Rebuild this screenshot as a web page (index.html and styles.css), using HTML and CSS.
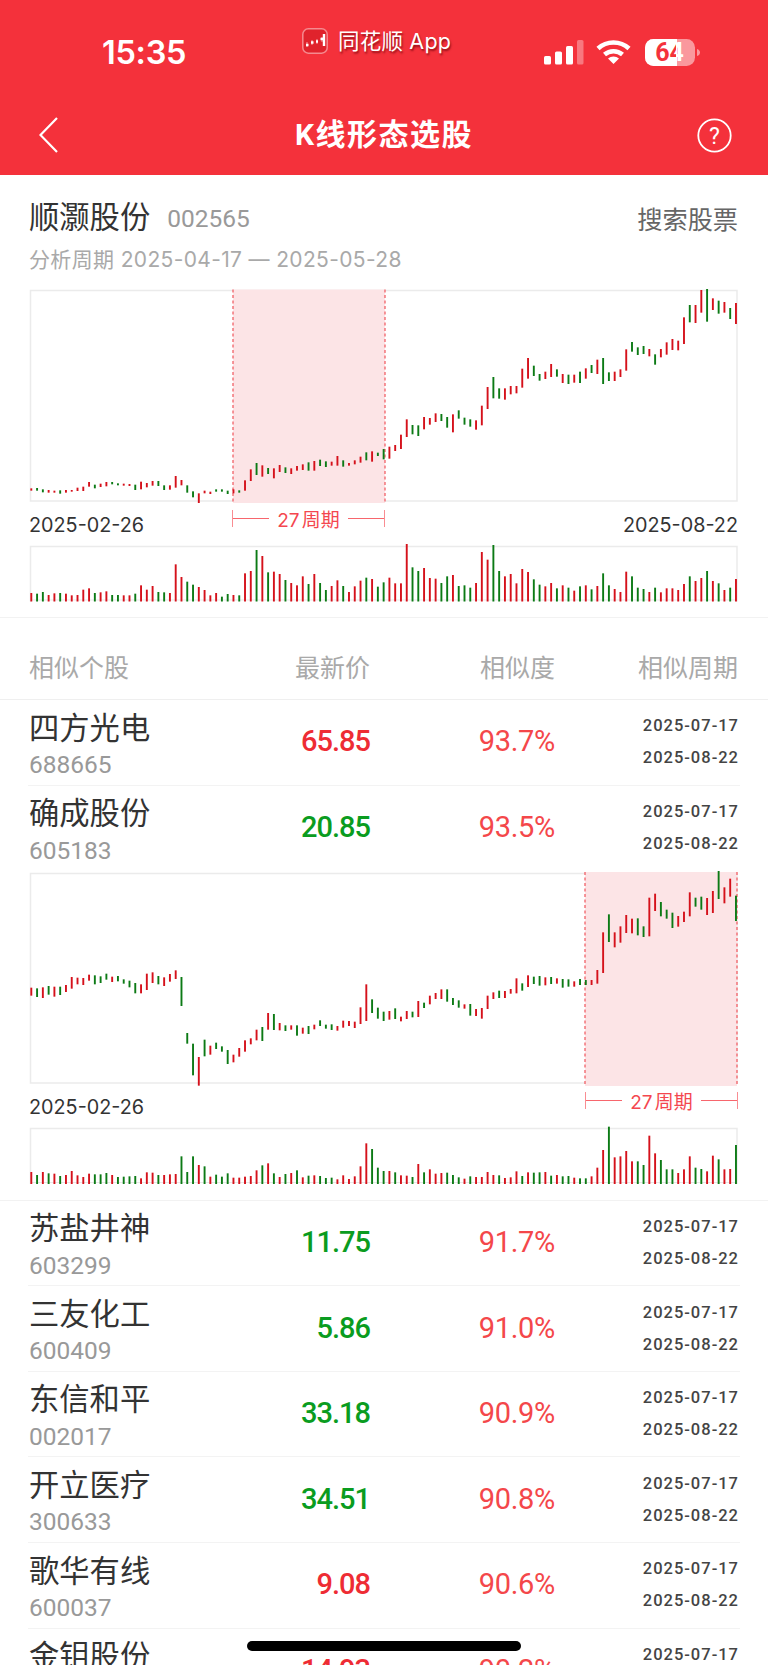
FILE: index.html
```html
<!DOCTYPE html>
<html lang="zh-CN">
<head>
<meta charset="utf-8">
<title>K线形态选股</title>
<link rel="stylesheet" href="styles.css">
</head>
<body>
<div class="page">
  <header class="top">
    <div class="status">
      <span class="time">15:35</span>
      <div class="source">
        <svg class="app-logo" viewBox="0 0 26 26" width="26" height="26">
          <rect x="0.8" y="0.8" width="24.4" height="24.4" rx="5.5" class="logo-bg"/>
          <path class="logo-line" d="M4 17h2.5M9 14.5h2.5M14 13.5h2M18.5 11h2.5M22 6v12"/>
          <path class="logo-wick" d="M5 14v5M10 12v5M15 11v5M20 9v5"/>
        </svg>
        <span class="source-name">同花顺 App</span>
      </div>
      <svg class="sys" viewBox="0 0 157 27" width="157" height="27">
        <rect class="wh" x="0" y="17" width="7" height="8.5" rx="1.6"/>
        <rect class="wh" x="11" y="12.5" width="7" height="13" rx="1.6"/>
        <rect class="wh" x="22" y="7" width="7" height="18.5" rx="1.6"/>
        <rect class="wh dim" x="33" y="1" width="6.5" height="24.5" rx="1.6"/>
        <path class="wifi-arc" d="M54 9.5 A 23 23 0 0 1 85 9.5"/>
        <path class="wifi-arc" d="M60.5 15.5 A 14 14 0 0 1 78.5 15.5"/>
        <path class="wh" d="M69.5 25 L64 19.6 A 8 8 0 0 1 75 19.6 Z"/>
        <defs>
          <linearGradient id="bat-text" x1="100" x2="152" gradientUnits="userSpaceOnUse" y1="0" y2="0">
            <stop offset="0.62" stop-color="#f4313b"/>
            <stop offset="0.62" stop-color="#ffffff"/>
          </linearGradient>
        </defs>
        <rect class="bat-dim" x="101" y="0" width="50" height="27" rx="8.5"/>
        <path class="wh" d="M109.5 0H133V27H109.5A8.5 8.5 0 0 1 101 18.500V8.500A8.500 8.500 0 0 1 109.500 0Z"/>
        <path class="bat-dim" d="M153 10c2 .6 3 2 3 3.500s-1 3-3 3.500Z"/>
        <text class="bat-num" x="125.500" y="22" fill="url(#bat-text)">64</text>
      </svg>
    </div>
    <nav class="nav">
      <svg class="back" viewBox="0 0 20 36" width="20" height="36"><path d="M18 1 1.500 18 18 35"/></svg>
      <h1 class="title">K线形态选股</h1>
      <svg class="help" viewBox="0 0 35 35" width="35" height="35">
        <circle cx="17.500" cy="17.500" r="16.200"/>
        <text x="17.500" y="25.500">?</text>
      </svg>
    </nav>
  </header>

  <section class="summary">
    <div class="stock-line">
      <div class="stock-id"><span class="stock-name">顺灏股份</span><span class="stock-code">002565</span></div>
      <a class="search">搜索股票</a>
    </div>
    <p class="period">分析周期 2025-04-17 — 2025-05-28</p>
  </section>

  <section class="chart chart-main">
    <svg class="kline" id="k1" width="768" height="220"></svg>
    <div class="axis">
      <span class="axis-date">2025-02-26</span>
      <span class="axis-date">2025-08-22</span>
      <div class="span span-a"><i></i><b>27 周期</b><i></i></div>
    </div>
    <svg class="vol" id="v1" width="768" height="58"></svg>
  </section>

  <div class="thead">
    <span>相似个股</span><span class="ta-r">最新价</span><span class="ta-r">相似度</span><span class="ta-r">相似周期</span>
  </div>

  <div class="row">
    <div class="who"><div class="name">四方光电</div><div class="code">688665</div></div>
    <div class="price up">65.85</div><div class="pct">93.7%</div>
    <div class="dates"><span>2025-07-17</span><span>2025-08-22</span></div>
  </div>
  <div class="row row-open">
    <div class="who"><div class="name">确成股份</div><div class="code">605183</div></div>
    <div class="price down">20.85</div><div class="pct">93.5%</div>
    <div class="dates"><span>2025-07-17</span><span>2025-08-22</span></div>
  </div>

  <section class="chart chart-open">
    <svg class="kline" id="k2" width="768" height="215"></svg>
    <div class="axis axis-open">
      <span class="axis-date">2025-02-26</span>
      <div class="span span-b"><i></i><b>27 周期</b><i></i></div>
    </div>
    <svg class="vol" id="v2" width="768" height="58"></svg>
  </section>

  <div class="row">
    <div class="who"><div class="name">苏盐井神</div><div class="code">603299</div></div>
    <div class="price down">11.75</div><div class="pct">91.7%</div>
    <div class="dates"><span>2025-07-17</span><span>2025-08-22</span></div>
  </div>
  <div class="row">
    <div class="who"><div class="name">三友化工</div><div class="code">600409</div></div>
    <div class="price down">5.86</div><div class="pct">91.0%</div>
    <div class="dates"><span>2025-07-17</span><span>2025-08-22</span></div>
  </div>
  <div class="row">
    <div class="who"><div class="name">东信和平</div><div class="code">002017</div></div>
    <div class="price down">33.18</div><div class="pct">90.9%</div>
    <div class="dates"><span>2025-07-17</span><span>2025-08-22</span></div>
  </div>
  <div class="row">
    <div class="who"><div class="name">开立医疗</div><div class="code">300633</div></div>
    <div class="price down">34.51</div><div class="pct">90.8%</div>
    <div class="dates"><span>2025-07-17</span><span>2025-08-22</span></div>
  </div>
  <div class="row">
    <div class="who"><div class="name">歌华有线</div><div class="code">600037</div></div>
    <div class="price up">9.08</div><div class="pct">90.6%</div>
    <div class="dates"><span>2025-07-17</span><span>2025-08-22</span></div>
  </div>
  <div class="row">
    <div class="who"><div class="name">金钼股份</div><div class="code">601958</div></div>
    <div class="price up">14.93</div><div class="pct">90.2%</div>
    <div class="dates"><span>2025-07-17</span><span>2025-08-22</span></div>
  </div>

  <div class="home-bar"></div>
</div>
<script src="charts.js"></script>
</body>
</html>
```

FILE: styles.css
```css
html, body {
  margin: 0;
  height: 1665px;
  overflow: hidden;
  background: #fff;
}
.page {
  position: relative;
  width: 768px;
  height: 1665px;
  overflow: hidden;
  font-family: "Roboto", "Noto Sans CJK SC", sans-serif;
  color: #333;
}

/* red header */
.top { background: #f4313b; height: 175px; color: #fff; }
.status {
  height: 104px;
  display: flex;
  align-items: center;
  padding-left: 102px;
  box-sizing: border-box;
}
.time {
  width: 200px;
  font-family: "Inter", sans-serif;
  font-size: 32.500px;
  font-weight: 600;
  letter-spacing: -0.3px;
}
.source {
  display: flex;
  align-items: center;
  gap: 10px;
  margin-bottom: 23px;
}
.source-name {
  font-family: "Inter", "Noto Sans CJK SC", sans-serif;
  font-size: 21.500px;
  line-height: 28px;
  letter-spacing: .2px;
  text-shadow: 1px 2px 2px rgba(110, 0, 10, .7);
}
.logo-bg { fill: #e0232c; stroke: #f58a8f; stroke-width: 1.500; }
.logo-line { stroke: #fff; stroke-width: 2.400; fill: none; }
.logo-wick { stroke: #fff; stroke-width: .8; fill: none; opacity: .7; }
.sys { margin-left: auto; margin-right: 67px; margin-top: 0; overflow: visible; }
.wh { fill: #fff; }
.dim { opacity: .35; }
.bat-dim { fill: #fff; opacity: .5; }
.wifi-arc { fill: none; stroke: #fff; stroke-width: 4.600; }
.bat-num {
  font-family: "Roboto", sans-serif;
  font-size: 25px;
  font-weight: 700;
  text-anchor: middle;
}

.nav {
  height: 62px;
  display: flex;
  align-items: center;
  justify-content: space-between;
  padding: 0 36px 0 39px;
}
.back { fill: none; }
.back path { fill: none; stroke: #fff; stroke-width: 2.200; }
.title {
  margin: 0;
  font-family: "Roboto", "Noto Sans CJK SC", sans-serif;
  font-size: 30px;
  line-height: 40px;
  font-weight: 700;
  letter-spacing: 1.500px;
  padding-left: 12px;
}
.help circle { fill: none; stroke: #fff; stroke-width: 1.800; }
.help text {
  fill: #fff;
  font-family: "Roboto", sans-serif;
  font-size: 23px;
  text-anchor: middle;
}

/* summary */
.summary { padding: 23px 30px 12px 29px; height: 111px; box-sizing: border-box; }
.stock-line { display: flex; justify-content: space-between; align-items: center; height: 40px; }
.stock-id { display: flex; align-items: center; gap: 17px; }
.stock-name { font-size: 30.300px; line-height: 40px; }
.stock-code { font-size: 24.500px; color: #999; }
.search { font-size: 25.200px; color: #666; }
.period {
  margin: 7px 0 0;
  font-family: "Inter", "Noto Sans CJK SC", sans-serif;
  font-size: 21px;
  line-height: 30px;
  letter-spacing: .35px;
  color: #a9a9a9;
}

/* charts */
.chart { display: block; }
.chart-main { padding-bottom: 13px; border-bottom: 1px solid #f2f2f2; height: 332px; box-sizing: border-box; }
.chart-open { padding-bottom: 14px; border-bottom: 1px solid #f2f2f2; height: 329.500px; box-sizing: border-box; }
.kline, .vol { display: block; overflow: visible; }
.axis {
  position: relative;
  height: 40px;
  padding: 0 30px 0 29px;
  display: flex;
  justify-content: space-between;
  align-items: center;
  font-family: "Inter", sans-serif;
}
.axis-open { height: 42px; }
.axis-date { font-size: 19.800px; color: #333; position: relative; top: -1px; }
.axis-open .axis-date { top: 0; }
.span {
  position: absolute;
  top: 4px;
  height: 17px;
  display: flex;
  align-items: center;
  gap: 8px;
  border-left: 1px solid #f98d92;
  border-right: 1px solid #f98d92;
  box-sizing: border-box;
  color: #f4474f;
}
.span i { flex: 1; height: 1px; background: #f7666d; }
.span b {
  position: relative;
  top: 2px;
  font-weight: 400;
  font-size: 19px;
  font-family: "Inter", "Noto Sans CJK SC", sans-serif;
  line-height: 17px;
  word-spacing: -3px;
}
.span-a { left: 232px; width: 153px; }
.span-b { left: 585px; width: 153px; top: 6px; }

.frame { fill: none; stroke: #ebebeb; stroke-width: 1.500; }
.shade { fill: #fce4e6; }
.dash { stroke: #f0555c; stroke-width: 1.200; stroke-dasharray: 3 2.500; fill: none; }
.base { stroke: #e9e9e9; stroke-width: 1; }
.r { fill: #d5111b; }
.g { fill: #0c7a15; }

/* table */
.thead {
  display: grid;
  grid-template-columns: 191px 150px 185px 1fr;
  padding: 14px 30px 0 29px;
  height: 82px;
  box-sizing: border-box;
  align-items: center;
  font-size: 25px;
  color: #a9a9a9;
  border-bottom: 1px solid #efefef;
}
.ta-r { text-align: right; }
.row {
  display: grid;
  grid-template-columns: 191px 150px 185px 1fr;
  margin: 0 28px;
  padding: 0 2px 2px 1px;
  height: 85.600px;
  box-sizing: border-box;
  align-items: center;
  border-bottom: 1px solid #f3f3f3;
}
.row-open { border-bottom: 0; }
.who { align-self: start; padding-top: 10.500px; }
.name { font-size: 30.300px; line-height: 36px; color: #333; }
.code { font-size: 24.500px; line-height: 28px; margin-top: 4.500px; color: #999; }
.price { font-size: 29px; font-weight: 500; text-align: right; letter-spacing: -1px; }
.up { color: #ee2c34; }
.down { color: #0a9c20; }
.pct { font-size: 29px; text-align: right; letter-spacing: -.3px; color: #f4474a; }
.dates { display: flex; flex-direction: column; align-items: flex-end; gap: 12px; margin-top: 2px; }
.dates span { font-size: 16.500px; line-height: 20px; font-weight: 500; letter-spacing: 1px; color: #444; margin-right: -1px; }

.home-bar {
  position: absolute;
  left: 247px;
  top: 1641px;
  width: 274px;
  height: 10px;
  border-radius: 5px;
  background: #000;
}
```

FILE: charts.js
```js
(function () {
  var NS = 'http://www.w3.org/2000/svg';
  var X0 = 31.3, STEP = 5.776, W = 1.9;

  function add(svg, tag, attrs) {
    var el = document.createElementNS(NS, tag);
    for (var k in attrs) el.setAttribute(k, attrs[k]);
    svg.appendChild(el);
    return el;
  }

  // Candles: "r625,632" = red, top and bottom in thirds of a pixel from cropY.
  function candles(id, data, top, cropY, box, shade) {
    var svg = document.getElementById(id);
    add(svg, 'rect', { 'class': 'frame', x: 30.5, y: box[0] - top, width: 706.5, height: box[1] - box[0] });
    add(svg, 'rect', { 'class': 'shade', x: shade[0], y: shade[2] - top, width: shade[1] - shade[0], height: shade[3] - shade[2] });
    [shade[0], shade[1]].forEach(function (x) {
      add(svg, 'line', { 'class': 'dash', x1: x, x2: x, y1: shade[2] - top, y2: shade[3] - top });
    });
    data.split(/\s+/).forEach(function (item, i) {
      var p = item.slice(1).split(',');
      var y1 = +p[0] / 3 + cropY - top, y2 = +p[1] / 3 + cropY - top;
      add(svg, 'rect', { 'class': item[0], x: X0 + i * STEP - W / 2, y: y1, width: W, height: y2 - y1 });
    });
  }

  // Volume: "r939" = red, bar top in thirds of a pixel; all bars share one foot.
  function volume(id, data, top, cropY, foot) {
    var svg = document.getElementById(id);
    add(svg, 'path', { 'class': 'frame', d: 'M30.5 ' + (foot - top) + 'V0.5H737V' + (foot - top) });
    add(svg, 'line', { 'class': 'base', x1: 30, x2: 737, y1: foot - top - 1.5, y2: foot - top - 1.5 });
    data.split(/\s+/).forEach(function (item, i) {
      var y = +item.slice(1) / 3 + cropY - top;
      add(svg, 'rect', { 'class': item[0], x: X0 + i * STEP - W / 2, y: y, width: W, height: foot - top - y });
    });
  }

  candles('k1',
    'r625,632 g624,632 g628,637 r630,638 r632,638 g631,641 r630,638 r630,635 r623,633 r620,633 r606,620 g614,625 r611,621 r606,619 g606,613 g610,616 r611,617 r612,618 g614,630 r605,628 r609,622 r603,617 g603,618 g616,630 r616,629 r588,623 r600,616 g616,638 g634,652 r640,669 r632,640 r635,642 g628,635 g628,635 g632,642 r628,640 g631,638 r601,632 r568,603 g549,585 r556,590 g564,582 r565,595 r555,576 g562,579 r565,582 r558,572 r553,570 g547,572 r543,572 g539,558 g544,561 r545,557 r528,557 g541,560 r549,557 r541,553 r530,548 g517,541 r514,545 g518,528 g507,538 ' +
    'r500,536 r495,513 r464,507 r418,471 g435,463 g436,468 r411,448 r414,434 r400,426 g402,423 g411,443 r403,457 g391,416 g413,434 g418,440 r421,449 r377,436 r321,387 g291,355 g325,356 r325,359 r318,343 r318,340 r266,323 r234,296 g257,288 g282,302 r275,297 r252,291 g268,290 r282,309 g284,312 r284,308 g275,309 r265,296 g255,279 r239,282 g234,312 g277,303 r275,303 r268,291 r208,272 g186,215 g202,225 g198,222 r207,229 g223,254 r207,232 r187,224 r177,210 r182,211 r112,192 g75,127 r75,129 r30,98 g27,125 r55,90 g62,101 r66,98 g84,117 r69,132',
    286, 280, [290.5, 501], [233, 385, 289.5, 503]);

  volume('v1',
    'r939 g941 g936 r945 r940 g939 r941 r946 r945 r929 r925 g939 r937 r934 g945 g945 r946 r946 g941 r916 r929 r918 g936 g937 r939 r853 r891 g905 g914 r921 r930 r946 r939 g950 g942 r945 g946 r880 r873 g810 r828 g877 r875 r882 g900 r909 r916 r889 g912 r882 g909 g930 r918 r901 g918 r936 r919 r902 g893 r897 g920 g907 ' +
    'r893 r910 r910 r792 g862 g873 r864 r894 r896 g909 g889 r885 g918 g916 g923 r909 r816 r839 g795 g873 r889 r882 r910 r867 r876 g898 g914 r919 r909 g925 r916 g923 r932 g919 r916 g928 r918 g880 g916 r927 r936 r875 g889 g923 g927 r936 g923 r937 r925 r925 r930 r912 g889 r903 r894 g873 r903 g910 r930 g923 r897',
    546, 280, 601.5);

  candles('k2',
    'r383,407 g385,411 r382,414 g378,404 r380,410 g380,405 r375,396 r351,386 r353,373 r354,375 r344,362 g346,373 g349,369 g341,359 r350,366 g348,364 g358,371 g362,382 g369,400 r373,400 r341,390 r337,369 g348,373 r352,378 r342,365 r331,357 g351,438 g519,551 g551,646 r591,677 g539,589 r557,584 g548,567 g559,575 g570,612 r584,607 r564,590 r541,575 r535,553 r509,541 g501,543 r459,509 g462,510 r489,511 g496,513 r496,509 g496,527 r503,521 g498,522 r494,508 g481,498 g494,506 g493,510 r498,512 r482,503 r483,498 r485,504 r442,492 r373,483 g418,459 g443,476 g455,483 ' +
    'r453,479 g445,477 r470,484 r453,477 g455,472 r423,471 g428,444 r407,433 r399,417 r388,417 g388,425 g414,435 g421,443 r433,446 g432,467 r447,468 r444,476 r407,447 r397,417 g392,414 r393,414 r387,401 r355,400 g370,392 r346,381 g350,372 g348,377 r352,376 g351,372 r355,371 g357,383 g358,380 r364,380 g357,375 g360,375 r360,375 r330,371 r217,339 g163,246 r217,262 r199,248 r165,219 r176,220 g175,226 g199,231 r113,229 r101,153 g126,169 g149,176 g158,204 r168,200 r155,186 r97,169 g113,140 g110,149 r114,165 r93,159 g33,117 r82,130 r56,110 g107,183',
    871, 860, [873.5, 1083], [585, 737, 872, 1086]);

  volume('v2',
    'r936 g945 r936 g940 r941 g948 r945 r933 r946 r951 r941 g943 g943 g939 r945 g951 g950 g949 g948 r955 r937 r938 g945 r945 r943 r942 g889 g936 g889 r915 g919 r950 g944 g950 g940 r953 r953 r950 r948 r931 g916 r910 g940 r951 g942 r939 g931 r952 g947 r946 g948 g954 g953 r958 r946 r957 r949 r919 r850 g867 g923 g933 ' +
    'r933 g937 r946 r947 g951 r912 g937 r928 r941 r939 g938 g945 g952 r956 g949 r951 r951 r936 r945 g946 r954 r952 r934 g948 r937 g938 g937 r936 g947 r945 g949 g948 r953 g955 g955 r949 r923 r870 g800 r892 r889 r873 r904 g904 g915 r827 r880 g900 g928 g928 r939 r928 r889 g923 g927 r934 r887 g898 r928 r927 g855',
    1128, 860, 1184);
})();
```
